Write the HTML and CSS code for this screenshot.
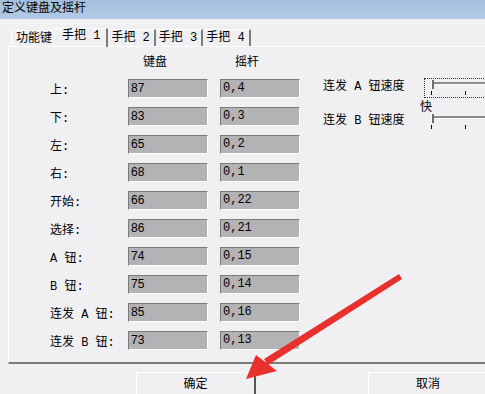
FILE: index.html
```html
<!DOCTYPE html>
<html lang="zh-CN">

<head>
    <meta charset="UTF-8">
    <title>定义键盘及摇杆</title>
    <link rel="stylesheet" href="styles.css">
</head>

<body>
    <div class="titlebar">定义键盘及摇杆</div>

    <div class="dialog">
        <div class="tabs">
            <div class="tab first">功能键</div>
            <div class="tab active">手把 1</div>
            <div class="tab">手把 2</div>
            <div class="tab">手把 3</div>
            <div class="tab">手把 4</div>
        </div>

        <div class="panel">
            <div class="keys">
                <div class="heads">
                    <span class="head">键盘</span>
                    <span class="head">摇杆</span>
                </div>
                <div class="grid">
                    <label>上:</label><div class="field">87</div><div class="field mono">0,4</div>
                    <label>下:</label><div class="field">83</div><div class="field mono">0,3</div>
                    <label>左:</label><div class="field">65</div><div class="field mono">0,2</div>
                    <label>右:</label><div class="field">68</div><div class="field mono">0,1</div>
                    <label>开始:</label><div class="field">66</div><div class="field mono">0,22</div>
                    <label>选择:</label><div class="field">86</div><div class="field mono">0,21</div>
                    <label>A 钮:</label><div class="field">74</div><div class="field mono">0,15</div>
                    <label>B 钮:</label><div class="field">75</div><div class="field mono">0,14</div>
                    <label>连发 A 钮:</label><div class="field">85</div><div class="field mono">0,16</div>
                    <label>连发 B 钮:</label><div class="field">73</div><div class="field mono">0,13</div>
                </div>
            </div>

            <div class="speed">
                <div class="speed-row">
                    <span class="speed-label">连发 A 钮速度</span>
                    <div class="slider focus">
                        <div class="track"></div>
                        <div class="thumb"></div>
                        <div class="ticks"><i></i><i></i></div>
                    </div>
                </div>
                <div class="fast">快</div>
                <div class="speed-row">
                    <span class="speed-label">连发 B 钮速度</span>
                    <div class="slider">
                        <div class="track"></div>
                        <div class="thumb"></div>
                        <div class="ticks"><i></i><i></i></div>
                    </div>
                </div>
            </div>
        </div>

        <div class="buttons">
            <button class="btn default">确定</button>
            <button class="btn">取消</button>
        </div>
    </div>

    <svg class="arrow" width="485" height="394" viewBox="0 0 485 394">
        <polygon points="399,274 402,279 268,365 264,359" fill="#e8302c" />
        <polygon points="246,379 256,355 277,371" fill="#e8302c" />
    </svg>
</body>

</html>
```

FILE: styles.css
```css
* {
    margin: 0;
    padding: 0;
    box-sizing: border-box;
}

body {
    width: 485px;
    height: 394px;
    overflow: hidden;
    position: relative;
    background: #f0eff2;
    font-family: "Liberation Mono", "Noto Sans CJK SC", monospace;
    font-size: 12px;
    color: #000;
}

.titlebar {
    height: 19px;
    line-height: 18px;
    padding-left: 2px;
    background: linear-gradient(180deg, #a3bedd 0%, #b2cbe5 100%);
}

.dialog {
    padding: 10px 0 0 8px;
    width: 640px;
}

/* tabs */
.tabs {
    display: flex;
    align-items: flex-end;
    height: 17px;
    padding-left: 3px;
}

.tab {
    height: 17px;
    line-height: 17px;
    padding: 0 4px 0 3px;
    border-top: 1px solid #ffffff;
    border-right: 2px solid #7c7c7c;
    white-space: nowrap;
}

.tab.first {
    padding: 0 3px 0 4px;
    border-left: 1px solid #ffffff;
    border-right: none;
    height: 16px;
    line-height: 16px;
    margin-top: 2px;
}

.tab.active {
    height: 19px;
    line-height: 15px;
    padding: 0 6px 0 7px;
    margin-bottom: -1px;
}

/* panel */
.panel {
    display: flex;
    height: 318px;
    border-top: 1px solid #ffffff;
    border-left: 1px solid #ffffff;
    border-bottom: 2px solid #7c7c7c;
    padding: 5px 0 0 41px;
}

.heads {
    display: flex;
    padding-left: 93px;
    gap: 68px;
    height: 27px;
}

.grid {
    display: grid;
    grid-template-columns: 66px 80px 80px;
    grid-auto-rows: 19px;
    column-gap: 12px;
    row-gap: 9px;
    align-items: center;
}

.field {
    height: 19px;
    line-height: 17px;
    padding-left: 2px;
    background: #b3b2b5;
    border-top: 1px solid #7a7a7a;
    border-left: 1px solid #7a7a7a;
    border-bottom: 1px solid #ffffff;
    border-right: 1px solid #ffffff;
    font-family: "Liberation Sans", sans-serif;
}

.field.mono {
    font-family: "Liberation Mono", monospace;
}

/* speed sliders */
.speed {
    margin-left: 23px;
    padding-top: 26px;
}

.speed-row {
    display: flex;
    align-items: flex-start;
}

.speed-label {
    width: 101px;
    line-height: 14px;
    margin-top: 2px;
}

.slider {
    position: relative;
    width: 80px;
    height: 20px;
    padding: 4px 0 0 7px;
}

.slider.focus {
    border: 1px dotted #333;
    padding: 3px 0 0 6px;
}

.track {
    height: 3px;
    border-top: 2px solid #8c8c8c;
    border-bottom: 1px solid #ffffff;
    background: #d8d8d8;
}

.thumb {
    position: absolute;
    left: 7px;
    top: 2px;
    width: 3px;
    height: 9px;
    border-left: 1px solid #ffffff;
    border-right: 2px solid #6e6e6e;
}

.focus .thumb {
    left: 6px;
    top: 1px;
}

.ticks {
    display: flex;
    gap: 33px;
    margin-top: 6px;
}

.ticks i {
    width: 1px;
    height: 4px;
    background: #000;
}

.fast {
    margin: 4px 0 -3px 97px;
    line-height: 13px;
    height: 13px;
}

/* buttons */
.buttons {
    display: flex;
    gap: 112px;
    padding: 8px 0 0 128px;
}

.btn {
    width: 120px;
    height: 26px;
    font: inherit;
    background: #f0eff2;
    border-top: 1px solid #ffffff;
    border-left: 1px solid #ffffff;
    border-right: 1px solid #d8d8d8;
    border-bottom: none;
    line-height: 24px;
    padding-bottom: 2px;
}

.btn.default {
    border-right: 2px solid #555555;
}

.arrow {
    position: absolute;
    left: 0;
    top: 0;
    pointer-events: none;
}
```
